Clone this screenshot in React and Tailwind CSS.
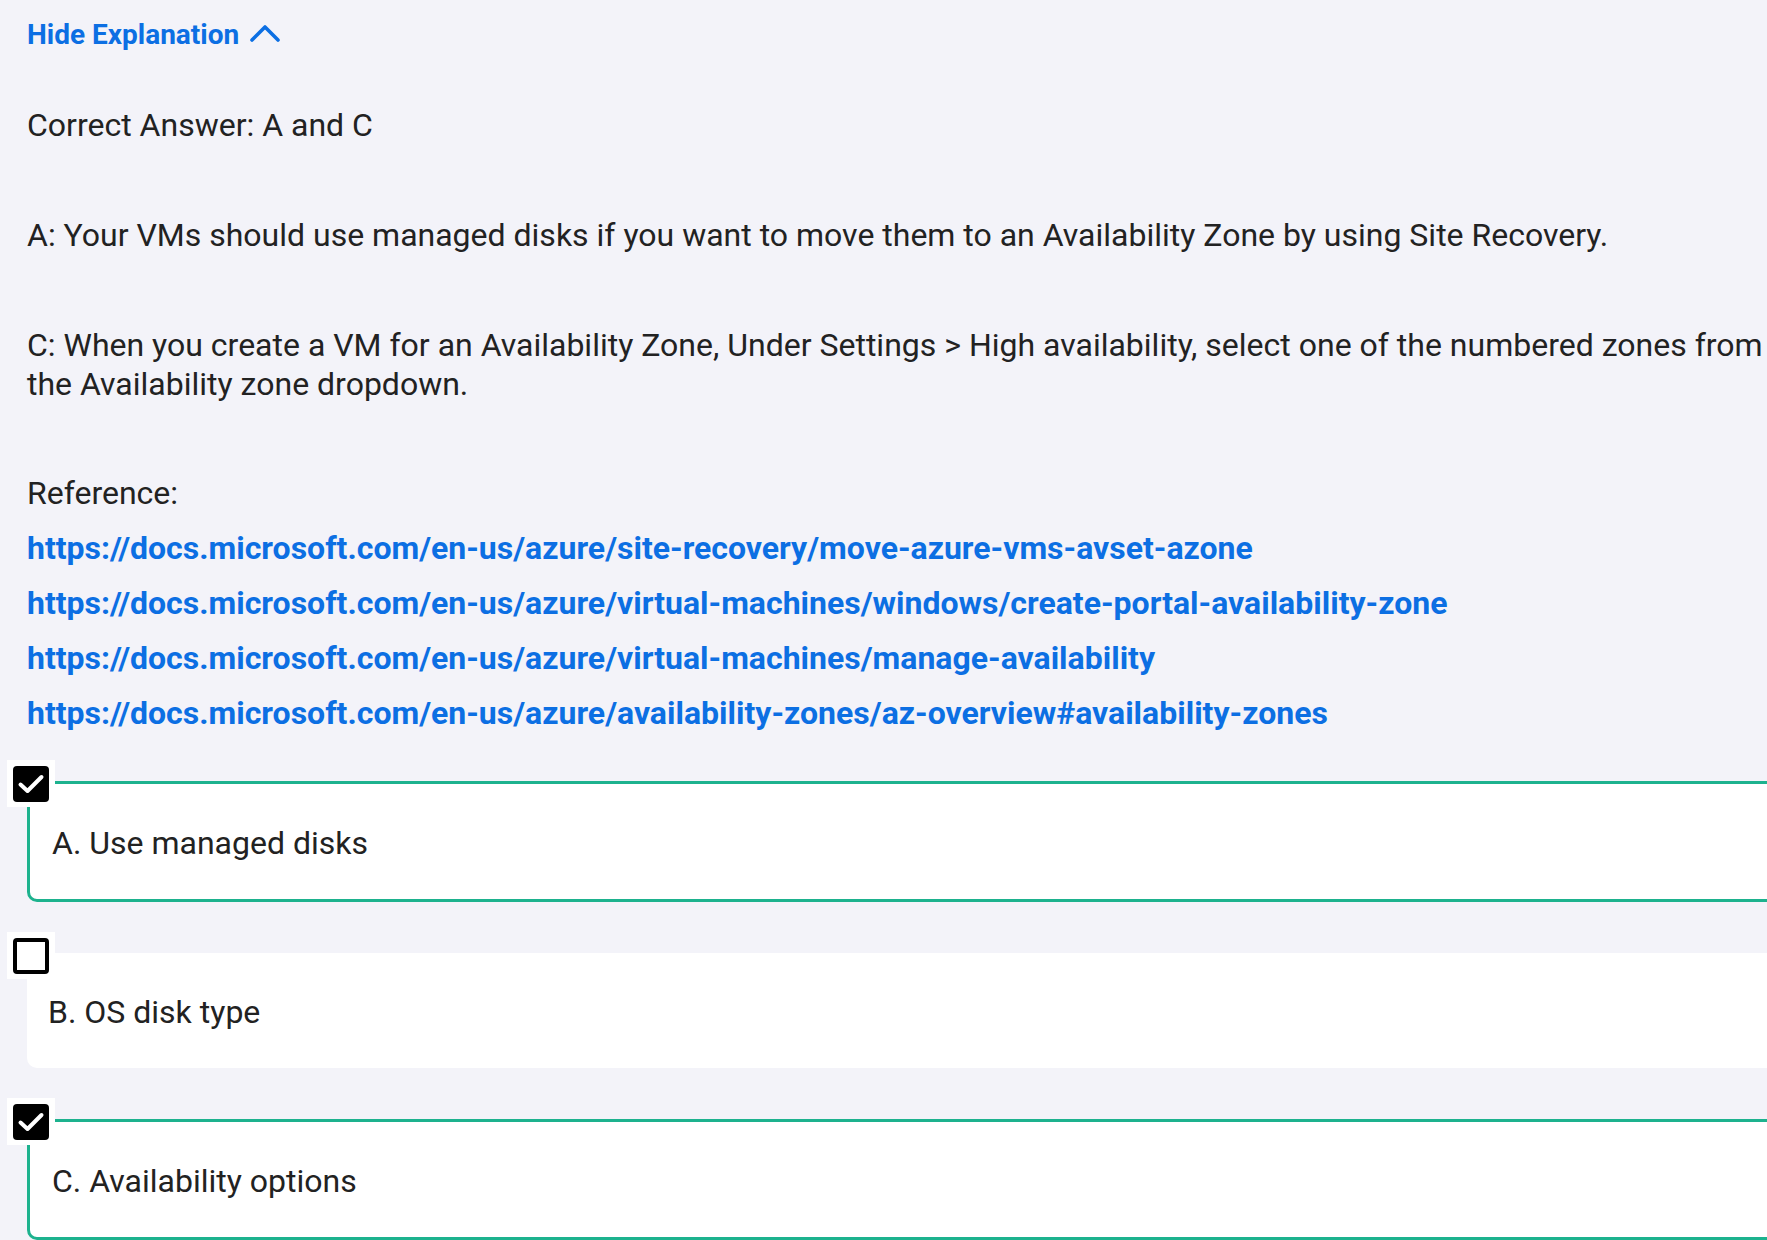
import React from "react";

const font = { fontFamily: "Roboto, 'Noto Sans', Arial, sans-serif" };

function CheckBox({ checked }) {
  return (
    <div className="absolute left-[7px] top-0 w-[48px] h-[47px] bg-white flex items-start justify-start p-[6px]">
      {checked ? (
        <div className="w-[36px] h-[36px] rounded-[4px] bg-black flex items-center justify-center">
          <svg width="30" height="30" viewBox="0 0 30 30" fill="none">
            <polyline points="4.5,15.5 11.5,22 25.5,8" stroke="white" strokeWidth="4" strokeLinecap="round" strokeLinejoin="round" />
          </svg>
        </div>
      ) : (
        <div className="w-[36px] h-[36px] rounded-[4px] bg-white border-[4px] border-black" />
      )}
    </div>
  );
}

function Option({ label, checked }) {
  return (
    <div className="relative pt-[21px]">
      {checked ? (
        <div className="ml-[27px] mr-[-60px] h-[121px] bg-white border-[3px] border-[#1db28e] rounded-[10px] flex items-center pl-[22px] pt-[2px]">
          <span className="text-[32px] text-[#222222]">{label}</span>
        </div>
      ) : (
        <div className="ml-[27px] mr-[-60px] h-[115px] bg-white rounded-[10px] flex items-center pl-[21px] pt-[2px]">
          <span className="text-[32px] text-[#222222]">{label}</span>
        </div>
      )}
      <CheckBox checked={checked} />
    </div>
  );
}

export default function App() {
  const links = [
    "https://docs.microsoft.com/en-us/azure/site-recovery/move-azure-vms-avset-azone",
    "https://docs.microsoft.com/en-us/azure/virtual-machines/windows/create-portal-availability-zone",
    "https://docs.microsoft.com/en-us/azure/virtual-machines/manage-availability",
    "https://docs.microsoft.com/en-us/azure/availability-zones/az-overview#availability-zones",
  ];
  return (
    <div className="w-full h-[1240px] overflow-hidden bg-[#f3f3f9]" style={font}>
      <div className="pl-[27px] pt-[15px]">
        <div className="h-[40px] flex items-center gap-[10px] text-[#0c6fe3] font-bold text-[28px]">
          <span>Hide Explanation</span>
          <svg width="32" height="20" viewBox="0 0 32 20" fill="none" className="mt-[-4px]">
            <polyline points="3,17 16,4 29,17" stroke="#0c6fe3" strokeWidth="3.6" strokeLinecap="round" strokeLinejoin="round" />
          </svg>
        </div>
        <div className="text-[#222222] text-[32px] leading-[39px]">
          <p className="mt-[51px]">Correct Answer: A and C</p>
          <p className="mt-[71px] whitespace-nowrap">
            A: Your VMs should use managed disks if you want to move them to an Availability Zone by using Site Recovery.
          </p>
          <p className="mt-[71px] whitespace-nowrap">
            C: When you create a VM for an Availability Zone, Under Settings &gt; High availability, select one of the numbered zones from
            <br />
            the Availability zone dropdown.
          </p>
          <div className="mt-[62px] leading-[55px]">
            <p>Reference:</p>
            {links.map((l) => (
              <p key={l} className="whitespace-nowrap">
                <a href="#" className="text-[#0c6fe3] font-bold">{l}</a>
              </p>
            ))}
          </div>
        </div>
      </div>
      <div className="mt-[19px] flex flex-col gap-[30px]">
        <Option label="A. Use managed disks" checked />
        <Option label="B. OS disk type" checked={false} />
        <Option label="C. Availability options" checked />
      </div>
    </div>
  );
}
